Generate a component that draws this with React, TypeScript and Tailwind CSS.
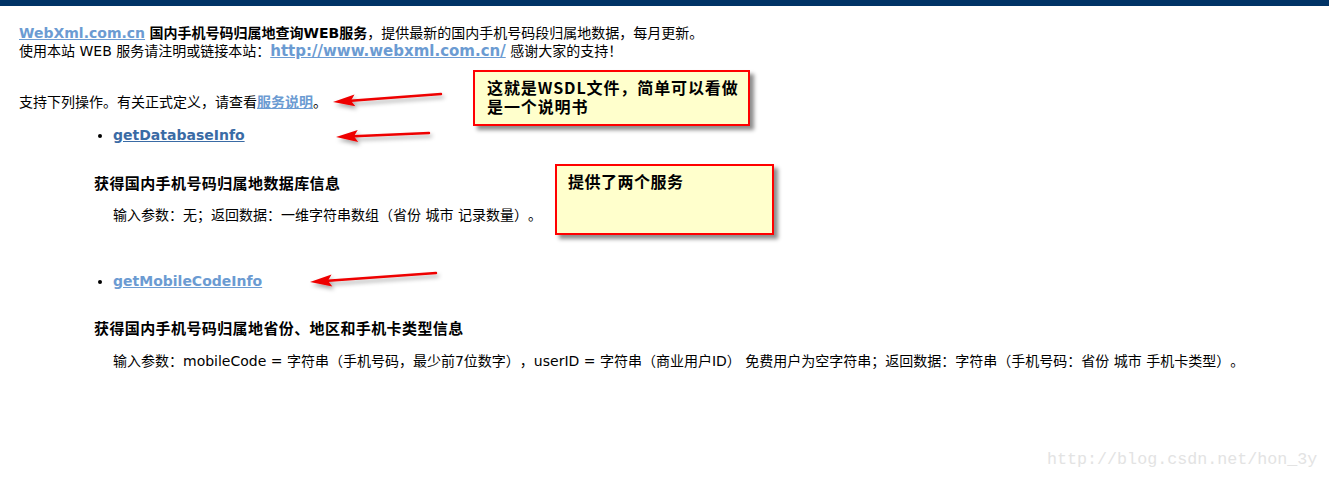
import React from "react";

const font = { fontFamily: '"DejaVu Sans", "Noto Sans CJK SC", sans-serif' };
const cjk = { fontFamily: '"Noto Sans CJK SC", "DejaVu Sans", sans-serif' };

function Arrow({ x1, y1, x2, y2 }: { x1: number; y1: number; x2: number; y2: number }) {
  const dx = x2 - x1;
  const dy = y2 - y1;
  const len = Math.sqrt(dx * dx + dy * dy);
  const ux = dx / len;
  const uy = dy / len;
  const hl = 22;
  const hw = 6;
  const bx = x2 - ux * hl;
  const by = y2 - uy * hl;
  const px = -uy;
  const py = ux;
  const pts = `${x2},${y2} ${bx + px * hw},${by + py * hw} ${bx + ux * 4},${by + uy * 4} ${bx - px * hw},${by - py * hw}`;
  return (
    <g>
      <line x1={x1} y1={y1} x2={bx + ux * 4} y2={by + uy * 4} stroke="#ee0000" strokeWidth={2.5} strokeLinecap="round" />
      <polygon points={pts} fill="#ee0000" />
    </g>
  );
}

export default function App() {
  return (
    <div
      className="relative w-[1329px] h-[479px] bg-white overflow-hidden text-[14px] text-black [text-spacing-trim:space-all]"
      style={font}
    >
      <div className="h-[6px] bg-[#003366]" />
      <div className="pl-[19px] pt-[18px]">
        <p className="leading-[18px]">
          <a className="font-bold text-[14px] text-[#6b9bd2] underline">WebXml.com.cn</a>{" "}
          <b>国内手机号码归属地查询WEB服务</b>，提供最新的国内手机号码段归属地数据，每月更新。
        </p>
        <p className="leading-[18px]">
          使用本站 WEB 服务请注明或链接本站：<a className="font-bold text-[15px] text-[#6b9bd2] underline">http://www.webxml.com.cn/</a> 感谢大家的支持！
        </p>
        <p className="leading-[18px] mt-[33px]">
          支持下列操作。有关正式定义，请查看<a className="font-bold text-[#6b9bd2] underline">服务说明</a>。
        </p>
        <ul className="list-disc pl-[94px] mt-[15px]">
          <li className="leading-[18px] text-[14px]">
            <a className="font-bold text-[#3a6ba5] underline">getDatabaseInfo</a>
          </li>
        </ul>
        <div className="pl-[75px]">
          <p className="font-bold text-[15px] tracking-[0.4px] leading-[18px] mt-[31px]">获得国内手机号码归属地数据库信息</p>
          <p className="leading-[18px] mt-[13px] pl-[19px]">输入参数：无；返回数据：一维字符串数组（省份 城市 记录数量）。</p>
        </div>
        <ul className="list-disc pl-[94px] mt-[48px]">
          <li className="leading-[18px] text-[14px]">
            <a className="font-bold text-[#6b9bd2] underline">getMobileCodeInfo</a>
          </li>
        </ul>
        <div className="pl-[75px]">
          <p className="font-bold text-[15px] tracking-[0.4px] leading-[18px] mt-[30px]">获得国内手机号码归属地省份、地区和手机卡类型信息</p>
          <p className="leading-[18px] mt-[14px] pl-[19px] whitespace-nowrap">
            输入参数：mobileCode = 字符串（手机号码，最少前7位数字），userID = 字符串（商业用户ID） 免费用户为空字符串；返回数据：字符串（手机号码：省份 城市 手机卡类型）。
          </p>
        </div>
      </div>

      <div className="absolute left-[473px] top-[70px] w-[277px] h-[56px] bg-[#ffffcc] border-2 border-[#ff0000] shadow-[4px_4px_4px_rgba(0,0,0,0.45)] pl-[12px] pt-[6px]">
        <p className="font-bold text-[16px] leading-[19px] tracking-[0.9px]" style={cjk}>
          这就是WSDL文件，简单可以看做<br />是一个说明书
        </p>
      </div>
      <div className="absolute left-[555px] top-[164px] w-[219px] h-[71px] bg-[#ffffcc] border-2 border-[#ff0000] shadow-[4px_4px_4px_rgba(0,0,0,0.45)] pl-[11px] pt-[6px]">
        <p className="font-bold text-[16px] leading-[19px] tracking-[0.5px]" style={cjk}>
          提供了两个服务
        </p>
      </div>

      <svg className="absolute left-0 top-0 pointer-events-none" width={1329} height={479}>
        <defs>
          <filter id="sh" x="-10%" y="-50%" width="130%" height="250%">
            <feDropShadow dx="2" dy="3" stdDeviation="2" floodColor="#000" floodOpacity="0.35" />
          </filter>
        </defs>
        <g filter="url(#sh)">
          <Arrow x1={441} y1={94} x2={333} y2={102} />
          <Arrow x1={429} y1={133} x2={336} y2={137} />
          <Arrow x1={436} y1={273} x2={310} y2={282} />
        </g>
      </svg>

      <div
        className="absolute left-[1047px] top-[450px] text-[16.7px] leading-[20px] text-[#e3e3e3]"
        style={{ fontFamily: '"Liberation Mono", monospace' }}
      >
        http://blog.csdn.net/hon_3y
      </div>
    </div>
  );
}
